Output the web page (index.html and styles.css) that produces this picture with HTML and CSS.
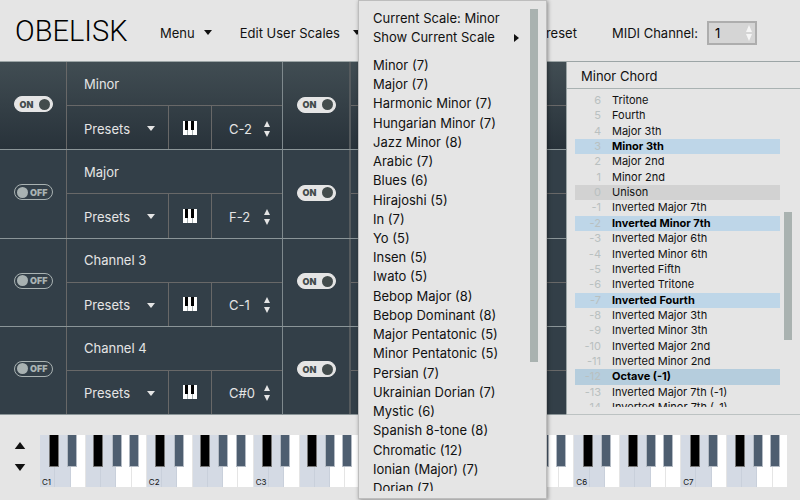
FILE: index.html
```
<!DOCTYPE html>
<html lang="en">
<head>
  <meta charset="UTF-8">
  <meta name="viewport" content="width=device-width, initial-scale=1">
  <title>Obelisk</title>
  <link rel="stylesheet" href="styles.css">
</head>
<body>
  <header class="header">
    <h1 class="logo">OBELISK</h1>
    <nav class="nav">
      <button class="menu-button">Menu <span class="caret"></span></button>
      <button class="menu-button">Edit User Scales <span class="caret caret-far"></span></button>
    </nav>
    <div class="header-right">
      <button class="menu-button">Preset</button>
      <label for="midi">MIDI Channel:</label>
      <div class="spinner">
        <input id="midi" type="text" inputmode="numeric" value="1">
        <svg class="spinner-arrows" viewBox="0 0 6 16"><path d="M3 0l3 7H0zM3 16l3-7H0z"/></svg>
      </div>
    </div>
  </header>

  <main class="main">
    <div class="channels" id="channels"></div>

    <section class="chord">
      <h2 class="chord-title">Minor Chord</h2>
      <div class="chord-body">
        <ul class="chord-list" id="chordList"></ul>
        <div class="chord-scroll"></div>
      </div>
    </section>
  </main>

  <footer class="footer">
    <div class="octave-buttons">
      <button aria-label="Octave up"><svg viewBox="0 0 12 8"><path d="M6 0l6 8H0z"/></svg></button>
      <button aria-label="Octave down"><svg viewBox="0 0 12 8"><path d="M6 8l6-8H0z"/></svg></button>
    </div>
    <div class="piano" id="piano"></div>
  </footer>

  <div class="popup">
    <div class="popup-items">
      <button class="popup-item">Current Scale: Minor</button>
      <button class="popup-item popup-sub">Show Current Scale
        <svg viewBox="0 0 5 8"><path d="M0 0l5 4-5 4z"/></svg>
      </button>
      <div class="scales" id="scales"></div>
    </div>
    <div class="popup-scroll"></div>
  </div>

  <script src="script.js"></script>
</body>
</html>
```
FILE: script.js
```
const leftChannels = [
  { name: 'Minor', note: 'C-2', on: true },
  { name: 'Major', note: 'F-2', on: false },
  { name: 'Channel 3', note: 'C-1', on: false },
  { name: 'Channel 4', note: 'C#0', on: false }
];

const chordNotes = [
  [6, 'Tritone'], [5, 'Fourth'], [4, 'Major 3th'], [3, 'Minor 3th', 'active'],
  [2, 'Major 2nd'], [1, 'Minor 2nd'], [0, 'Unison', 'root'],
  [-1, 'Inverted Major 7th'], [-2, 'Inverted Minor 7th', 'active'],
  [-3, 'Inverted Major 6th'], [-4, 'Inverted Minor 6th'], [-5, 'Inverted Fifth'],
  [-6, 'Inverted Tritone'], [-7, 'Inverted Fourth', 'active'],
  [-8, 'Inverted Major 3th'], [-9, 'Inverted Minor 3th'],
  [-10, 'Inverted Major 2nd'], [-11, 'Inverted Minor 2nd'],
  [-12, 'Octave (-1)', 'active octave-row'], [-13, 'Inverted Major 7th (-1)'],
  [-14, 'Inverted Minor 7th (-1)']
];

const scales = [
  'Minor (7)', 'Major (7)', 'Harmonic Minor (7)', 'Hungarian Minor (7)',
  'Jazz Minor (8)', 'Arabic (7)', 'Blues (6)', 'Hirajoshi (5)', 'In (7)',
  'Yo (5)', 'Insen (5)', 'Iwato (5)', 'Bebop Major (8)', 'Bebop Dominant (8)',
  'Major Pentatonic (5)', 'Minor Pentatonic (5)', 'Persian (7)',
  'Ukrainian Dorian (7)', 'Mystic (6)', 'Spanish 8-tone (8)',
  'Chromatic (12)', 'Ionian (Major) (7)', 'Dorian (7)'
];

function toggle(on) {
  return `<div class="toggle-cell">
    <button class="toggle ${on ? 'on' : 'off'}" aria-pressed="${on}">
      <span class="toggle-text">${on ? 'ON' : 'OFF'}</span><span class="knob"></span>
    </button>
  </div>`;
}

function channel(ch) {
  return `<div class="channel">
    ${toggle(ch.on)}
    <div class="details">
      <div class="channel-name">${ch.name}</div>
      <div class="controls">
        <button class="presets">Presets <span class="caret"></span></button>
        <button class="keys" aria-label="Keyboard">
          <svg viewBox="0 0 14 14">
            <path fill="#fff" d="M0 0h14v14H0z"/>
            <path d="M2 0h3v9H2zM8 0h3v9H8z"/>
            <path stroke="#a9b2b2" stroke-width="1" d="M4.5 9v5M9.5 9v5"/>
          </svg>
        </button>
        <button class="note">${ch.note}
          <svg viewBox="0 0 6 16"><path d="M3 0l3 6H0zM3 16l3-6H0z"/></svg>
        </button>
      </div>
    </div>
  </div>`;
}

// second bank only has the switches, its details are empty
function emptyChannel() {
  return `<div class="channel bank-b">
    ${toggle(true)}
    <div class="details"><div class="channel-name"></div><div class="controls"></div></div>
  </div>`;
}

document.getElementById('channels').innerHTML =
  leftChannels.map(ch => channel(ch) + emptyChannel()).join('');

document.getElementById('chordList').innerHTML = chordNotes.map(([num, name, cls]) =>
  `<li class="${cls || ''}"><span class="num">${num}</span>${name}</li>`).join('');

document.getElementById('scales').innerHTML =
  scales.map(s => `<button class="popup-item">${s}</button>`).join('');

// C D F G are tinted, C# and F# are in the scale
let piano = '';
for (let i = 1; i <= 7; i++) {
  piano += '<div class="octave">';
  for (const key of 'CDEFGAB') {
    const tint = 'CDFG'.includes(key) ? ' tint' : '';
    piano += `<div class="white${tint}">${key === 'C' ? 'C' + i : ''}</div>`;
  }
  for (const key of ['cs', 'ds', 'fs', 'gs', 'as']) {
    piano += `<div class="black ${key}"></div>`;
  }
  piano += '</div>';
}
document.getElementById('piano').innerHTML = piano;
```
FILE: styles.css
```
* {
  box-sizing: border-box;
}

body {
  margin: 0;
  height: 100vh;
  display: flex;
  flex-direction: column;
  position: relative;
  overflow: hidden;
  background: #e5e5e5;
  color: #111;
  font-family: Inter, sans-serif;
  font-size: 13px;
}

button {
  padding: 0;
  border: none;
  background: none;
  color: inherit;
  font: inherit;
  text-align: left;
  cursor: pointer;
}

svg {
  display: block;
  fill: currentColor;
}

/* header */
.header {
  height: 61px;
  display: flex;
  align-items: center;
  padding: 4px 43px 0 15px;
}

.logo {
  width: 145px;
  margin: 0;
  padding-bottom: 4px;
  color: #000;
  font-family: Roboto, sans-serif;
  font-size: 29px;
  font-weight: 300;
  line-height: 32px;
}

.nav {
  display: flex;
  gap: 28px;
}

.menu-button {
  display: flex;
  align-items: center;
  gap: 9px;
}

.caret {
  border: 4px solid transparent;
  border-top: 5px solid currentColor;
  border-bottom: none;
}

.caret-far {
  margin-left: 4px;
}

.header-right {
  display: flex;
  align-items: center;
  margin-left: auto;
}

.header-right label {
  margin: 0 9px 0 35px;
}

.spinner {
  width: 50px;
  height: 24px;
  display: flex;
  align-items: center;
  padding-right: 3px;
  border: 2px solid #adadad;
  background: #d5d5d5;
}

.spinner input {
  flex: 1;
  min-width: 0;
  padding: 0 0 0 6px;
  border: none;
  background: none;
  font: inherit;
}

.spinner-arrows {
  width: 6px;
  height: 16px;
  color: #f5f5f5;
}

/* channels */
.main {
  flex: 1;
  min-height: 0;
  display: grid;
  grid-template-columns: minmax(0, 1fr) 234px;
  border-top: 1px solid #9ca5a6;
}

.channels {
  display: grid;
  grid-template-columns: 1fr 1fr;
  grid-template-rows: repeat(4, 1fr);
  background: #333f48;
  color: #e5e5e5;
}

.channel {
  display: flex;
  border-right: 1px solid #7f898d;
  border-bottom: 1px solid #8b9598;
}

.channel:nth-child(-n+2) {
  background: linear-gradient(#414d53, #28323a);
}

.bank-b {
  border-right: none;
}

.toggle-cell {
  width: 67px;
  display: flex;
  align-items: center;
  justify-content: center;
  padding-bottom: 3px;
  border-right: 1px solid #686868;
}

.bank-b .toggle-cell {
  width: 68px;
  padding-bottom: 2px;
  border-right: 2px solid #565b5e;
}

.toggle {
  width: 39px;
  height: 16px;
  display: flex;
  align-items: center;
  justify-content: space-between;
  padding: 0 2px 0 5px;
  border: 1px solid #e5e5e5;
  border-radius: 8px;
  font-size: 9px;
  font-weight: 900;
}

.toggle.on {
  background: #e5e5e5;
  color: #434c4c;
}

.toggle.off {
  flex-direction: row-reverse;
  padding: 0 4px 0 2px;
  border-color: #a9b2b2;
  color: #a9b2b2;
}

.knob {
  width: 11px;
  height: 11px;
  border-radius: 50%;
  background: currentColor;
}

.details {
  flex: 1;
  display: flex;
  flex-direction: column;
}

.channel-name {
  flex: 1;
  display: flex;
  align-items: center;
  padding-left: 17px;
  border-bottom: 1px solid #686868;
}

.controls {
  flex: 1;
  display: flex;
}

.presets {
  flex: 1;
  display: flex;
  align-items: center;
  justify-content: space-between;
  padding: 2px 13px 0 17px;
}

.keys {
  width: 44px;
  display: flex;
  align-items: center;
  justify-content: center;
  border: solid #686868;
  border-width: 0 1px;
}

.keys svg {
  width: 14px;
  height: 14px;
  fill: #000;
}

.note {
  width: 70px;
  display: flex;
  align-items: center;
  justify-content: space-between;
  padding: 2px 12px 0 17px;
}

.note svg {
  width: 6px;
  height: 16px;
}

/* chord panel */
.chord {
  min-height: 0;
  display: flex;
  flex-direction: column;
  border-left: 1px solid #9ca5a6;
  border-bottom: 1px solid #bcc2c2;
}

.chord-title {
  margin: 0;
  padding: 2px 14px 0;
  border-bottom: 1px solid #a9b2b2;
  font-size: 13px;
  font-weight: 400;
  line-height: 24px;
}

.chord-body {
  flex: 1;
  min-height: 0;
  display: flex;
  justify-content: space-between;
  padding: 4px 8px 7px;
}

.chord-list {
  width: 205px;
  display: grid;
  grid-template-rows: repeat(20, 1fr) 7px;
  overflow: hidden;
  margin: 0;
  padding: 0;
  list-style: none;
  font-size: 11px;
  line-height: 15px;
}

.chord-list li {
  display: flex;
  gap: 11px;
}

.num {
  width: 26px;
  color: #b9c0c0;
  font-weight: 400;
  text-align: right;
}

.active {
  background: #bed6e8;
  color: #000;
  font-weight: 700;
}

.octave-row {
  background: #b5cddd;
}

.root {
  background: #d2d2d2;
}

.chord-scroll {
  width: 8px;
  height: 128px;
  margin-top: 119px;
  background: #a9b2b0;
}

/* keyboard */
.footer {
  height: 85px;
  display: flex;
  padding: 20px 12px 13px 14px;
}

.octave-buttons {
  width: 26px;
  display: flex;
  flex-direction: column;
  gap: 15px;
  padding-top: 7px;
}

.octave-buttons svg {
  width: 12px;
  height: 7px;
}

.piano {
  flex: 1;
  display: flex;
}

.octave {
  flex: 1;
  display: flex;
  position: relative;
}

.white {
  flex: 1 1 0;
  min-width: 0;
  display: flex;
  align-items: flex-end;
  padding-left: 2px;
  border-right: 1px solid #e5e5e5;
  background: #fff;
  font-size: 8px;
  line-height: 10px;
}

.white.tint {
  border-color: #c9d0db;
  background: #d4dae4;
}

.black {
  position: absolute;
  top: 0;
  width: 10px;
  height: 32px;
  border: 1px solid #b4bbc4;
  border-top: none;
  background: #4e5e70;
}

.cs { left: 8%; }
.ds { left: 25%; }
.fs { left: 50%; }
.gs { left: 67%; }
.as { left: 83%; }

.cs,
.fs {
  border-color: #777;
  background: #000;
}

/* scale menu */
.popup {
  position: absolute;
  top: 0;
  bottom: 1px;
  left: 358px;
  width: 189px;
  display: flex;
  justify-content: space-between;
  padding: 8px 8px 7px 14px;
  border: 1px solid #bdbdbd;
  background: #e5e5e5;
  box-shadow: 1px 1px 4px rgba(0, 0, 0, 0.4);
}

.popup-items {
  width: 146px;
  display: flex;
  flex-direction: column;
}

.popup-item {
  line-height: 19px;
}

.popup-sub {
  display: flex;
  align-items: center;
  justify-content: space-between;
}

.popup-sub svg {
  width: 5px;
  height: 8px;
}

.scales {
  flex: 1;
  min-height: 0;
  display: grid;
  grid-template-rows: repeat(22, 1fr) 12px;
  overflow: hidden;
  margin-top: 9px;
}

.scales .popup-item {
  display: flex;
}

.popup-scroll {
  width: 8px;
  height: 353px;
  background: #a9b2b0;
}
```
